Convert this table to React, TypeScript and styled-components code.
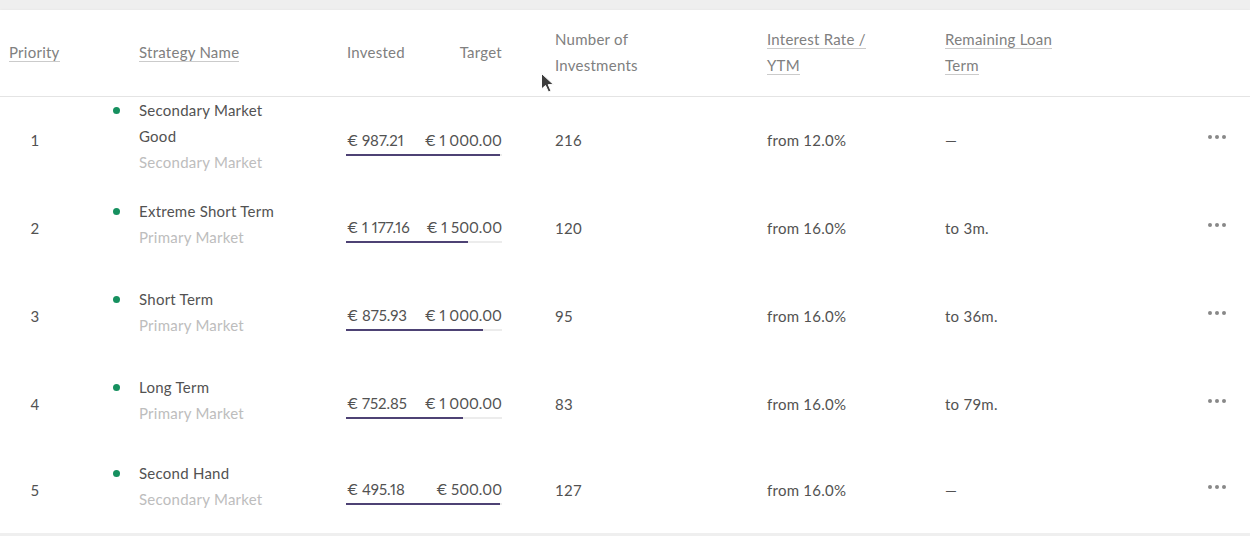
import React from "react";
import styled, { createGlobalStyle } from "styled-components";

const Global = createGlobalStyle`
  html, body { margin: 0; padding: 0; }
  body {
    background: #efefef;
    font-family: Lato, "Open Sans", sans-serif;
    font-size: 15px;
    letter-spacing: 0.25px;
    color: #525252;
    overflow: hidden;
  }
`;

const Page = styled.div`
  position: relative;
  padding-top: 10px;
  width: 1250px;
`;

const Card = styled.div`
  background: #fff;
  box-shadow: 0 1px 3px rgba(0, 0, 0, 0.1), 0 3px 0 #dcdcdc;
`;

const COLS = "99px 238px 209px 212px 178px 1fr 60px";

const HeaderRow = styled.div`
  display: grid;
  grid-template-columns: ${COLS};
  align-items: center;
  height: 87px;
  padding-left: 9px;
  border-bottom: 1px solid #e4e4e4;
  color: #808080;
  line-height: 26px;
  box-sizing: border-box;
`;

const HeadCell = styled.div`
  max-width: 124px;
  padding-bottom: 3px;
`;

const Sortable = styled.span`
  border-bottom: 1px solid #cbcbcb;
`;

const HeadSplit = styled.div`
  display: flex;
  justify-content: space-between;
  width: 156px;
  padding-bottom: 3px;
`;

const Row = styled.div`
  display: grid;
  grid-template-columns: ${COLS};
  align-items: center;
  height: 88px;
  padding-left: 9px;
  padding-bottom: 3px;
  box-sizing: border-box;
  line-height: 26px;
  &:first-child {
    padding-bottom: 7px;
  }
  &:last-child {
    height: 84px;
  }
`;

const Body = styled.div``;

const PriorityNum = styled.div`
  width: 52px;
  text-align: center;
`;

const Strategy = styled.div`
  display: flex;
  align-items: flex-start;
  padding-bottom: 8px;
`;

const Dot = styled.span`
  width: 7px;
  height: 7px;
  border-radius: 50%;
  background: #16905f;
  margin: 10px 18px 0 5px;
  flex: none;
`;

const Names = styled.div`
  display: flex;
  flex-direction: column;
  max-width: 150px;
  padding-left: 1px;
`;

const Sub = styled.span`
  color: #bdbdbd;
`;

const Amounts = styled.div`
  width: 156px;
  display: flex;
  flex-direction: column;
  gap: 1px;
  padding-top: 2px;
  letter-spacing: 0;
  font-variant-numeric: proportional-nums;
`;

const AmountLine = styled.div`
  display: flex;
  justify-content: space-between;
  padding-left: 1px;
`;

const Track = styled.div`
  height: 2px;
  background: #ececec;
`;

const Fill = styled.div`
  height: 100%;
  background: #4d4274;
`;

const Actions = styled.div`
  display: flex;
  justify-content: flex-end;
  padding-right: 24px;
  padding-bottom: 6px;
`;

const MoreDots = styled.span`
  display: flex;
  gap: 3px;
  & > i {
    display: block;
    width: 4px;
    height: 4px;
    border-radius: 50%;
    background: #888;
  }
`;

const Cursor = styled.svg`
  position: absolute;
  left: 540px;
  top: 72px;
`;

type Item = {
  p: number;
  name: string;
  market: string;
  invested: number;
  target: number;
  investedText: string;
  targetText: string;
  count: number;
  rate: string;
  term: string;
};

const data: Item[] = [
  { p: 1, name: "Secondary Market Good", market: "Secondary Market", invested: 987.21, target: 1000, investedText: "€ 987.21", targetText: "€ 1 000.00", count: 216, rate: "from 12.0%", term: "—" },
  { p: 2, name: "Extreme Short Term", market: "Primary Market", invested: 1177.16, target: 1500, investedText: "€ 1 177.16", targetText: "€ 1 500.00", count: 120, rate: "from 16.0%", term: "to 3m." },
  { p: 3, name: "Short Term", market: "Primary Market", invested: 875.93, target: 1000, investedText: "€ 875.93", targetText: "€ 1 000.00", count: 95, rate: "from 16.0%", term: "to 36m." },
  { p: 4, name: "Long Term", market: "Primary Market", invested: 752.85, target: 1000, investedText: "€ 752.85", targetText: "€ 1 000.00", count: 83, rate: "from 16.0%", term: "to 79m." },
  { p: 5, name: "Second Hand", market: "Secondary Market", invested: 495.18, target: 500, investedText: "€ 495.18", targetText: "€ 500.00", count: 127, rate: "from 16.0%", term: "—" },
];

export default function App() {
  return (
    <Page>
      <Global />
      <Card>
        <HeaderRow>
          <HeadCell><Sortable>Priority</Sortable></HeadCell>
          <HeadCell style={{ paddingLeft: 31 }}><Sortable>Strategy Name</Sortable></HeadCell>
          <HeadSplit>
            <span style={{ paddingLeft: 1 }}>Invested</span>
            <span>Target</span>
          </HeadSplit>
          <HeadCell>Number of Investments</HeadCell>
          <HeadCell><Sortable>Interest Rate /</Sortable> <Sortable>YTM</Sortable></HeadCell>
          <HeadCell><Sortable>Remaining Loan</Sortable> <Sortable>Term</Sortable></HeadCell>
          <div />
        </HeaderRow>
        <Body>
          {data.map((d) => (
            <Row key={d.p}>
              <PriorityNum>{d.p}</PriorityNum>
              <Strategy>
                <Dot />
                <Names>
                  <span>{d.name}</span>
                  <Sub>{d.market}</Sub>
                </Names>
              </Strategy>
              <Amounts>
                <AmountLine>
                  <span>{d.investedText}</span>
                  <span>{d.targetText}</span>
                </AmountLine>
                <Track>
                  <Fill style={{ width: `${Math.min(100, (d.invested / d.target) * 100)}%` }} />
                </Track>
              </Amounts>
              <div>{d.count}</div>
              <div>{d.rate}</div>
              <div>{d.term}</div>
              <Actions>
                <MoreDots><i /><i /><i /></MoreDots>
              </Actions>
            </Row>
          ))}
        </Body>
      </Card>
      <Cursor width="16" height="22" viewBox="0 0 16 22">
        <path d="M1.5 1.5 L1.5 17 L5.5 13.5 L8.5 20 L11 19 L8.2 12.6 L13.5 12.6 Z" fill="#3d3d3d" stroke="#fff" strokeWidth="1" strokeLinejoin="round" />
      </Cursor>
    </Page>
  );
}
